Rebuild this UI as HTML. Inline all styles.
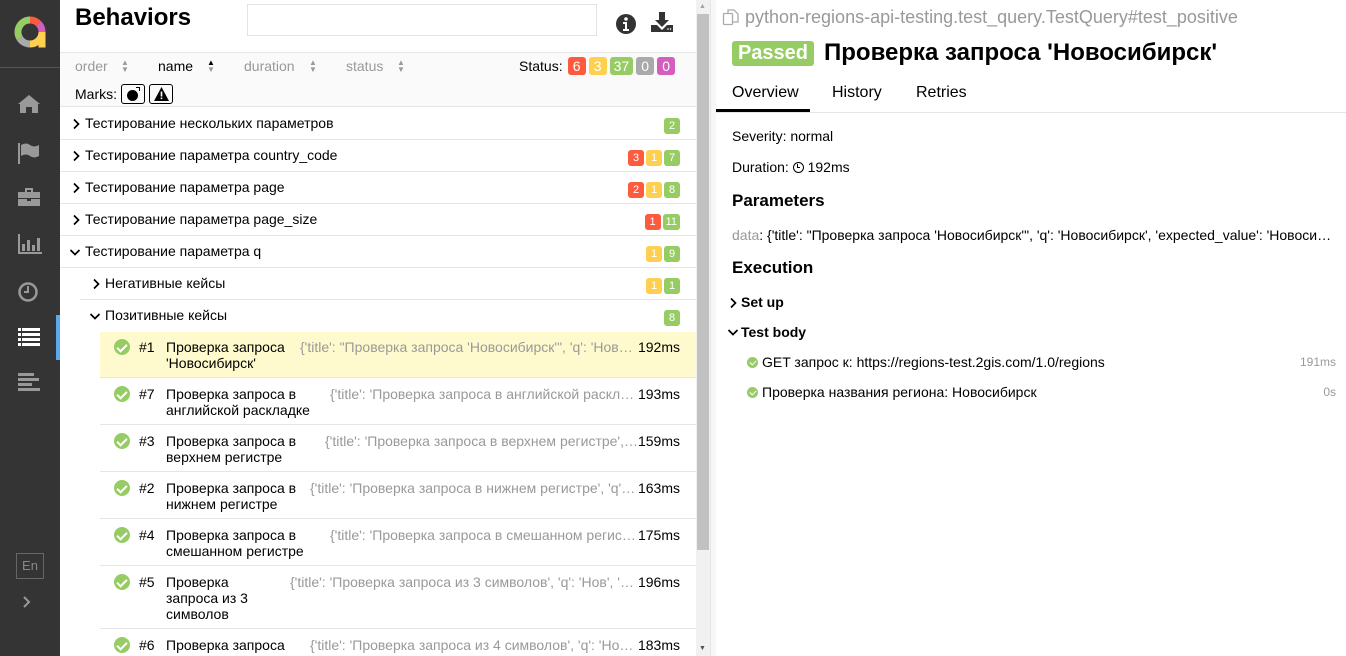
<!DOCTYPE html>
<html><head><meta charset="utf-8"><style>
*{margin:0;padding:0;box-sizing:border-box}
body{width:1346px;height:656px;overflow:hidden;font-family:"Liberation Sans","Noto Sans CJK SC",sans-serif;font-size:14px;color:#000;background:#fff;position:relative}
.a{position:absolute;white-space:nowrap}
.sb{left:0;top:0;width:60px;height:656px;background:#343434}
.ic{position:absolute;left:17px;fill:#999}
.bd{display:inline-block;height:18px;line-height:18px;padding:0 4px;border-radius:3px;color:#fff;font-size:14px;min-width:18px;text-align:center;margin-left:3px}
.r{background:#fd5a3e}.y{background:#ffd050}.g{background:#97cc64}.gr{background:#aaa}.p{background:#d35ebe}
.bd.s{height:16px;line-height:16px;font-size:11px;padding:0 3px;min-width:16px;margin-left:2px}
.row{position:absolute;left:60px;width:636px;border-bottom:1px solid #e5e5e5}
.gray{color:#999}
.chk{position:absolute;width:16px;height:16px;border-radius:50%;background:#97cc64}
.chk:after{content:"";position:absolute;left:5px;top:2.5px;width:4px;height:8px;border:solid #fff;border-width:0 2px 2px 0;transform:rotate(45deg)}
.chs{position:absolute;width:11px;height:11px;border-radius:50%;background:#97cc64}
.chs:after{content:"";position:absolute;left:3.5px;top:1.5px;width:3px;height:5px;border:solid #fff;border-width:0 1.5px 1.5px 0;transform:rotate(45deg)}
.cv{position:absolute}
.so{position:absolute;font-size:8px;line-height:7px;color:#999}
</style></head><body>
<div class="a sb">
 <svg class="a" style="left:12px;top:14px" width="36" height="36" viewBox="0 0 36 36">
  <g fill="none" stroke-width="7">
   <path d="M18 6 A12 12 0 0 0 7.6 24" stroke="#97cc64"/>
   <path d="M18 6 A12 12 0 0 1 26.5 9.5" stroke="#fd5a3e"/>
   <path d="M26.5 9.5 A12 12 0 0 1 30 18" stroke="#d35ebe"/>
   <path d="M7.6 24 A12 12 0 0 0 18 30" stroke="#aaa"/>
   <path d="M18 30 A12 12 0 0 0 30 18" stroke="#ffd050"/>
  </g>
  <rect x="26.5" y="18" width="7" height="15.5" fill="#ffd050"/>
 </svg>
 <div class="a" style="left:0;top:67px;width:60px;height:1px;background:#555"></div>
 <svg class="ic" style="top:94px" width="24" height="20" viewBox="0 0 24 20"><path d="M12 1 L1 10 L3 10 L3 19 L9 19 L9 13 L15 13 L15 19 L21 19 L21 10 L23 10 Z"/></svg>
 <svg class="ic" style="top:142px" width="24" height="22" viewBox="0 0 24 22"><rect x="1" y="1" width="2" height="21"/><path d="M4 3 Q9 0 13 3 T22 3 L22 14 Q17 17 13 14 T4 14Z"/></svg>
 <svg class="ic" style="top:187px" width="24" height="20" viewBox="0 0 24 20"><path d="M8 1h8v4h-2V3h-4v2H8z M1 5h22v6H1z M1 12h9v2h4v-2h9v7H1z"/></svg>
 <svg class="ic" style="top:233px" width="26" height="22" viewBox="0 0 26 22"><path d="M1 1h2v18h22v2H1z M5 11h3v7H5z M10 7h3v11h-3z M15 12h3v6h-3z M20 5h3v13h-3z"/></svg>
 <svg class="ic" style="top:281px" width="22" height="22" viewBox="0 0 22 22"><circle cx="11" cy="11" r="8.5" fill="none" stroke="#999" stroke-width="2.5"/><path d="M10 5h2v7H7v-2h3z"/></svg>
 <svg class="ic" style="top:327px;fill:#fff" width="24" height="20" viewBox="0 0 24 20"><path d="M1 1h22v3H1z M1 6h22v3H1z M1 11h22v3H1z M1 16h22v3H1z"/><rect x="4" y="1" width="1" height="18" fill="#343434"/></svg>
 <div class="a" style="left:56px;top:315px;width:4px;height:45px;background:#59a9ec"></div>
 <svg class="ic" style="top:372px" width="24" height="20" viewBox="0 0 24 20"><path d="M1 1h16v3H1z M1 6h21v3H1z M1 11h14v3H1z M1 16h22v3H1z"/></svg>
 <div class="a" style="left:16px;top:553px;width:28px;height:26px;border:1px solid #666;color:#888;font-size:13px;line-height:24px;text-align:center">En</div>
 <svg class="ic" style="top:595px;left:21px" width="12" height="14" viewBox="0 0 12 14"><path d="M3 2l5 5-5 5" fill="none" stroke="#999" stroke-width="2"/></svg>
</div>

<!-- left pane -->
<div class="a" style="left:75px;top:4px;font-size:24px;font-weight:bold">Behaviors</div>
<div class="a" style="left:247px;top:4px;width:350px;height:32px;border:1px solid #e3e3e3"></div>
<svg class="a" style="left:615px;top:13px" width="22" height="22" viewBox="0 0 22 22"><circle cx="11" cy="11" r="10" fill="#333"/><circle cx="11" cy="6" r="1.8" fill="#fff"/><path d="M8 9h4v7h2v2H8v-2h2v-5H8z" fill="#fff"/></svg>
<svg class="a" style="left:650px;top:11px" width="24" height="22" viewBox="0 0 24 22"><path d="M9 1h6v8h4l-7 7-7-7h4z M1 14h6l5 5 5-5h6v7H1z" fill="#333"/><circle cx="18" cy="18" r="0.8" fill="#fff"/><circle cx="20.5" cy="18" r="0.8" fill="#fff"/></svg>
<div class="a" style="left:60px;top:52px;width:636px;height:55px;background:#fafafa;border-top:1px solid #e5e5e5;border-bottom:1px solid #e5e5e5"></div>
<div class="a" style="left:75px;top:58px;color:#999">order</div>
<div class="so" style="left:121px;top:59px">▲<br>▼</div>
<div class="a" style="left:158px;top:58px">name</div>
<div class="so" style="left:207px;top:59px"><span style="color:#000">▲</span><br>▼</div>
<div class="a" style="left:244px;top:58px;color:#999">duration</div>
<div class="so" style="left:309px;top:59px">▲<br>▼</div>
<div class="a" style="left:346px;top:58px;color:#999">status</div>
<div class="so" style="left:397px;top:59px">▲<br>▼</div>
<div class="a" style="left:519px;top:57px">Status:<span class="bd r" style="margin-left:5px">6</span><span class="bd y">3</span><span class="bd g">37</span><span class="bd gr">0</span><span class="bd p">0</span></div>
<div class="a" style="left:75px;top:86px">Marks:</div>
<div class="a" style="left:121px;top:84px;width:24px;height:20px;border:1px solid #000;border-radius:3px"><div class="a" style="left:5px;top:5px;width:11px;height:11px;border-radius:50%;background:#000"></div><div class="a" style="left:14px;top:2px;width:4px;height:4px;border-top:1px solid #000;border-right:1px solid #000"></div></div>
<div class="a" style="left:149px;top:84px;width:24px;height:20px;border:1px solid #000;border-radius:3px"><svg class="a" style="left:4px;top:2px" width="15" height="14" viewBox="0 0 15 14"><path d="M7.5 0L15 14H0Z"/><rect x="6.7" y="4.5" width="1.6" height="5" fill="#fff"/><rect x="6.7" y="10.5" width="1.6" height="1.6" fill="#fff"/></svg></div>

<svg width="0" height="0" style="position:absolute"><defs>
<symbol id="cr" viewBox="0 0 8 12"><path d="M2 1.5l4.5 4.5-4.5 4.5" fill="none" stroke="#000" stroke-width="1.7"/></symbol>
<symbol id="cd" viewBox="0 0 12 8"><path d="M1.5 2l4.5 4.5 4.5-4.5" fill="none" stroke="#000" stroke-width="1.7"/></symbol>
</defs></svg>

<div class="row" style="top:107px;height:33px"></div>
<svg class="cv" style="left:72px;top:118px" width="8" height="12"><use href="#cr"/></svg>
<div class="a" style="left:85px;top:115px">Тестирование нескольких параметров</div>
<div class="a" style="right:666px;top:116px"><span class="bd s g">2</span></div>
<div class="row" style="top:140px;height:32px"></div>
<svg class="cv" style="left:72px;top:150px" width="8" height="12"><use href="#cr"/></svg>
<div class="a" style="left:85px;top:147px">Тестирование параметра country_code</div>
<div class="a" style="right:666px;top:148px"><span class="bd s r">3</span><span class="bd s y">1</span><span class="bd s g">7</span></div>
<div class="row" style="top:172px;height:32px"></div>
<svg class="cv" style="left:72px;top:182px" width="8" height="12"><use href="#cr"/></svg>
<div class="a" style="left:85px;top:179px">Тестирование параметра page</div>
<div class="a" style="right:666px;top:180px"><span class="bd s r">2</span><span class="bd s y">1</span><span class="bd s g">8</span></div>
<div class="row" style="top:204px;height:32px"></div>
<svg class="cv" style="left:72px;top:214px" width="8" height="12"><use href="#cr"/></svg>
<div class="a" style="left:85px;top:211px">Тестирование параметра page_size</div>
<div class="a" style="right:666px;top:212px"><span class="bd s r">1</span><span class="bd s g">11</span></div>
<div class="row" style="top:236px;height:32px"></div>
<svg class="cv" style="left:69px;top:248px" width="12" height="8"><use href="#cd"/></svg>
<div class="a" style="left:85px;top:243px">Тестирование параметра q</div>
<div class="a" style="right:666px;top:244px"><span class="bd s y">1</span><span class="bd s g">9</span></div>
<div class="row" style="top:268px;height:32px;left:80px;width:616px"></div>
<svg class="cv" style="left:92px;top:278px" width="8" height="12"><use href="#cr"/></svg>
<div class="a" style="left:105px;top:275px">Негативные кейсы</div>
<div class="a" style="right:666px;top:276px"><span class="bd s y">1</span><span class="bd s g">1</span></div>
<svg class="cv" style="left:89px;top:312px" width="12" height="8"><use href="#cd"/></svg>
<div class="a" style="left:105px;top:307px">Позитивные кейсы</div>
<div class="a" style="right:666px;top:308px"><span class="bd s g">8</span></div>

<div class="a" style="left:100px;top:332px;width:596px;height:46px;background:#fffacd;border-bottom:1px solid #e5e5e5"></div>
<div class="row" style="top:378px;height:47px;left:100px;width:596px"></div>
<div class="row" style="top:425px;height:47px;left:100px;width:596px"></div>
<div class="row" style="top:472px;height:47px;left:100px;width:596px"></div>
<div class="row" style="top:519px;height:47px;left:100px;width:596px"></div>
<div class="row" style="top:566px;height:63px;left:100px;width:596px"></div>

<div class="chk" style="left:114px;top:339px"></div><div class="a" style="left:139px;top:339px">#1</div><div class="a" style="left:166px;top:339px;line-height:16px">Проверка запроса<br>'Новосибирск'</div><div class="a gray" style="left:300px;top:339px">{'title': "Проверка запроса 'Новосибирск'", 'q': 'Нов…</div><div class="a" style="right:666px;top:339px">192ms</div>
<div class="chk" style="left:114px;top:386px"></div><div class="a" style="left:139px;top:386px">#7</div><div class="a" style="left:166px;top:386px;line-height:16px">Проверка запроса в<br>английской раскладке</div><div class="a gray" style="left:330px;top:386px">{'title': 'Проверка запроса в английской раскл…</div><div class="a" style="right:666px;top:386px">193ms</div>
<div class="chk" style="left:114px;top:433px"></div><div class="a" style="left:139px;top:433px">#3</div><div class="a" style="left:166px;top:433px;line-height:16px">Проверка запроса в<br>верхнем регистре</div><div class="a gray" style="left:325px;top:433px">{'title': 'Проверка запроса в верхнем регистре',…</div><div class="a" style="right:666px;top:433px">159ms</div>
<div class="chk" style="left:114px;top:480px"></div><div class="a" style="left:139px;top:480px">#2</div><div class="a" style="left:166px;top:480px;line-height:16px">Проверка запроса в<br>нижнем регистре</div><div class="a gray" style="left:310px;top:480px">{'title': 'Проверка запроса в нижнем регистре', 'q'…</div><div class="a" style="right:666px;top:480px">163ms</div>
<div class="chk" style="left:114px;top:527px"></div><div class="a" style="left:139px;top:527px">#4</div><div class="a" style="left:166px;top:527px;line-height:16px">Проверка запроса в<br>смешанном регистре</div><div class="a gray" style="left:330px;top:527px">{'title': 'Проверка запроса в смешанном регис…</div><div class="a" style="right:666px;top:527px">175ms</div>
<div class="chk" style="left:114px;top:574px"></div><div class="a" style="left:139px;top:574px">#5</div><div class="a" style="left:166px;top:574px;line-height:16px">Проверка<br>запроса из 3<br>символов</div><div class="a gray" style="left:290px;top:574px">{'title': 'Проверка запроса из 3 символов', 'q': 'Нов', '…</div><div class="a" style="right:666px;top:574px">196ms</div>
<div class="chk" style="left:114px;top:637px"></div><div class="a" style="left:139px;top:637px">#6</div><div class="a" style="left:166px;top:637px">Проверка запроса</div><div class="a gray" style="left:310px;top:637px">{'title': 'Проверка запроса из 4 символов', 'q': 'Но…</div><div class="a" style="right:666px;top:637px">183ms</div>

<!-- scrollbar + divider -->
<div class="a" style="left:696px;top:0;width:14px;height:656px;background:#f1f1f1"></div>
<div class="a" style="left:697px;top:14px;width:12px;height:536px;background:#c1c1c1"></div>
<div class="a" style="left:699px;top:3px;font-size:7px;color:#a3a3a3">▲</div>
<div class="a" style="left:699px;top:645px;font-size:7px;color:#505050">▼</div>
<div class="a" style="left:710px;top:0;width:6px;height:656px;background:#f7f7f7;border-left:1px solid #e5e5e5"></div>

<!-- right pane -->
<svg class="a" style="left:722px;top:8px" width="18" height="18" viewBox="0 0 18 18"><rect x="1.5" y="5.5" width="9" height="11" rx="1" fill="none" stroke="#aaa" stroke-width="1.3"/><path d="M6 5V2h6l4 4v8h-5" fill="none" stroke="#aaa" stroke-width="1.3"/></svg>
<div class="a" style="left:745px;top:7px;font-size:18px;color:#999">python-regions-api-testing.test_query.TestQuery#test_positive</div>
<div class="a" style="left:732px;top:41px;height:25px;width:82px;background:#97cc64;color:#fff;font-weight:bold;font-size:20px;line-height:25px;text-align:center;border-radius:3px">Passed</div>
<div class="a" style="left:824px;top:39px;font-size:24px;font-weight:bold">Проверка запроса 'Новосибирск'</div>
<div class="a" style="left:732px;top:84px;font-size:16px">Overview</div>
<div class="a" style="left:832px;top:84px;font-size:16px">History</div>
<div class="a" style="left:916px;top:84px;font-size:16px">Retries</div>
<div class="a" style="left:716px;top:112px;width:630px;height:1px;background:#e5e5e5"></div>
<div class="a" style="left:716px;top:109px;width:94px;height:3px;background:#000"></div>
<div class="a" style="left:732px;top:128px">Severity: normal</div>
<div class="a" style="left:732px;top:159px">Duration: <span style="display:inline-block;width:11px;height:11px;border:1.5px solid #000;border-radius:50%;vertical-align:-1px;position:relative"><span style="position:absolute;left:3px;top:1px;width:3px;height:4px;border-left:1.5px solid #000;border-bottom:1.5px solid #000"></span></span> 192ms</div>
<div class="a" style="left:732px;top:191px;font-size:17px;font-weight:bold">Parameters</div>
<div class="a" style="left:732px;top:227px;width:604px;overflow:hidden;text-overflow:ellipsis"><span class="gray">data</span>: {'title': "Проверка запроса 'Новосибирск'", 'q': 'Новосибирск', 'expected_value': 'Новосибирск'}</div>
<div class="a" style="left:732px;top:258px;font-size:17px;font-weight:bold">Execution</div>
<svg class="cv" style="left:729px;top:297px" width="8" height="12"><use href="#cr"/></svg>
<div class="a" style="left:741px;top:294px;font-weight:bold">Set up</div>
<svg class="cv" style="left:727px;top:328px" width="12" height="8"><use href="#cd"/></svg>
<div class="a" style="left:741px;top:324px;font-weight:bold">Test body</div>
<div class="chs" style="left:747px;top:357px"></div><div class="a" style="left:762px;top:354px">GET запрос к: https://regions-test.2gis.com/1.0/regions</div><div class="a gray" style="right:10px;top:355px;font-size:12px">191ms</div>
<div class="chs" style="left:747px;top:387px"></div><div class="a" style="left:762px;top:384px">Проверка названия региона: Новосибирск</div><div class="a gray" style="right:10px;top:385px;font-size:12px">0s</div>
</body></html>
